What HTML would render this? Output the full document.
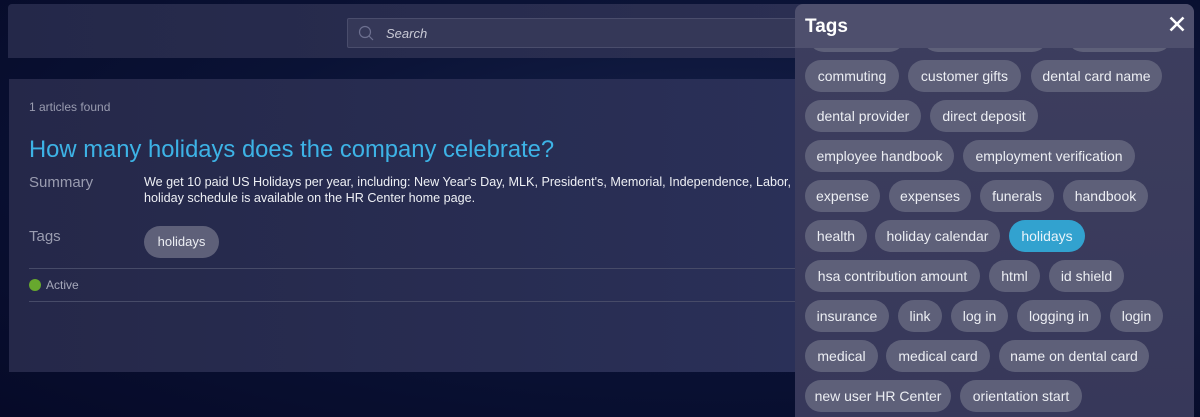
<!DOCTYPE html>
<html><head><meta charset="utf-8"><style>
*{margin:0;padding:0;box-sizing:border-box}
html,body{width:1200px;height:417px;overflow:hidden}
body{background:radial-gradient(ellipse at 60% 40%,#16214a 0%,#0a1235 50%,#060a28 100%);font-family:"Liberation Sans",sans-serif;position:relative}
.top{position:absolute;left:8px;top:4px;width:800px;height:54px;background:linear-gradient(90deg,#242849,#2b2f52);border-radius:4px 0 0 0}
.search{position:absolute;left:347px;top:18px;width:470px;height:30px;background:#353858;border:1px solid #4a4d6c;border-radius:2px}
.search span{position:absolute;left:38px;top:7px;font-size:13px;font-style:italic;color:#c9cad6}
.card{position:absolute;left:9px;top:79px;width:800px;height:293px;background:linear-gradient(90deg,#252849,#2a3058)}
.t{position:absolute;color:#fff}
.line{position:absolute;left:29px;width:780px;height:1px;background:#474b68}
.panel{position:absolute;left:795px;top:4px;width:399px;height:413px;background:linear-gradient(180deg,#3d3e5e,#37385a);border-radius:8px 8px 0 0;overflow:hidden}
.hdr{position:absolute;left:0;top:0;width:399px;height:44px;background:#4e4f6d;z-index:2;border-radius:8px 8px 0 0}
.p{position:absolute;height:32px;border-radius:16px;background:#5e6079;color:#eceef3;font-size:14px;line-height:32px;text-align:center;white-space:nowrap}
.sel{background:#32a2cf;color:#e8f3fa}
</style></head><body>
<div class="top"></div>
<div class="search"><svg style="position:absolute;left:10px;top:6px" width="16" height="16" viewBox="0 0 16 16"><circle cx="7" cy="7" r="5.5" fill="none" stroke="#6d7090" stroke-width="1.2"/><line x1="11" y1="11" x2="15" y2="15" stroke="#6d7090" stroke-width="1.2"/></svg><span>Search</span></div>
<div class="card"></div>
<div class="t" style="left:29px;top:100px;font-size:12px;color:#9a9cb0">1 articles found</div>
<div class="t" style="left:29px;top:136px;font-size:23.8px;color:#3db3e6">How many holidays does the company celebrate?</div>
<div class="t" style="left:29px;top:174px;font-size:15px;color:#9a9cb0">Summary</div>
<div class="t" style="left:144px;top:174px;font-size:12.6px;line-height:16px;color:#eef0f5;width:660px;white-space:nowrap">We get 10 paid US Holidays per year, including: New Year's Day, MLK, President's, Memorial, Independence, Labor,<br>holiday schedule is available on the HR Center home page.</div>
<div class="t" style="left:29px;top:228px;font-size:15px;color:#9a9cb0">Tags</div>
<div class="p" style="left:144px;top:226px;width:75px;font-size:13px">holidays</div>
<div class="line" style="top:268px"></div>
<div style="position:absolute;left:29px;top:279px;width:12px;height:12px;border-radius:50%;background:#67a82e"></div>
<div class="t" style="left:46px;top:278px;font-size:12px;color:#a7a9bb">Active</div>
<div class="line" style="top:301px"></div>
<div class="panel">
<div class="hdr"><div class="t" style="left:10px;top:12px;font-size:19px;font-weight:bold;color:#fff">Tags</div>
<svg style="position:absolute;left:374px;top:12px" width="16" height="16" viewBox="0 0 16 16"><path d="M1.5 1.5L14.5 14.5M14.5 1.5L1.5 14.5" stroke="#fff" stroke-width="2.6"/></svg></div>
<div class="p" style="left:13px;top:16px;width:97px"></div>
<div class="p" style="left:127px;top:16px;width:126px"></div>
<div class="p" style="left:272px;top:16px;width:105px"></div>
</div>
<div id="pills">
<div class="p" style="left:805px;top:60px;width:94px">commuting</div>
<div class="p" style="left:908px;top:60px;width:113px">customer gifts</div>
<div class="p" style="left:1031px;top:60px;width:131px">dental card name</div>
<div class="p" style="left:805px;top:100px;width:116px">dental provider</div>
<div class="p" style="left:930px;top:100px;width:108px">direct deposit</div>
<div class="p" style="left:805px;top:140px;width:149px">employee handbook</div>
<div class="p" style="left:963px;top:140px;width:172px">employment verification</div>
<div class="p" style="left:805px;top:180px;width:75px">expense</div>
<div class="p" style="left:889px;top:180px;width:82px">expenses</div>
<div class="p" style="left:980px;top:180px;width:74px">funerals</div>
<div class="p" style="left:1063px;top:180px;width:85px">handbook</div>
<div class="p" style="left:805px;top:220px;width:62px">health</div>
<div class="p" style="left:875px;top:220px;width:125px">holiday calendar</div>
<div class="p sel" style="left:1009px;top:220px;width:76px">holidays</div>
<div class="p" style="left:805px;top:260px;width:175px">hsa contribution amount</div>
<div class="p" style="left:989px;top:260px;width:51px">html</div>
<div class="p" style="left:1049px;top:260px;width:75px">id shield</div>
<div class="p" style="left:805px;top:300px;width:84px">insurance</div>
<div class="p" style="left:898px;top:300px;width:44px">link</div>
<div class="p" style="left:951px;top:300px;width:57px">log in</div>
<div class="p" style="left:1017px;top:300px;width:84px">logging in</div>
<div class="p" style="left:1110px;top:300px;width:53px">login</div>
<div class="p" style="left:805px;top:340px;width:73px">medical</div>
<div class="p" style="left:886px;top:340px;width:104px">medical card</div>
<div class="p" style="left:999px;top:340px;width:150px">name on dental card</div>
<div class="p" style="left:805px;top:380px;width:146px">new user HR Center</div>
<div class="p" style="left:960px;top:380px;width:122px">orientation start</div>
</div>
</body></html>
